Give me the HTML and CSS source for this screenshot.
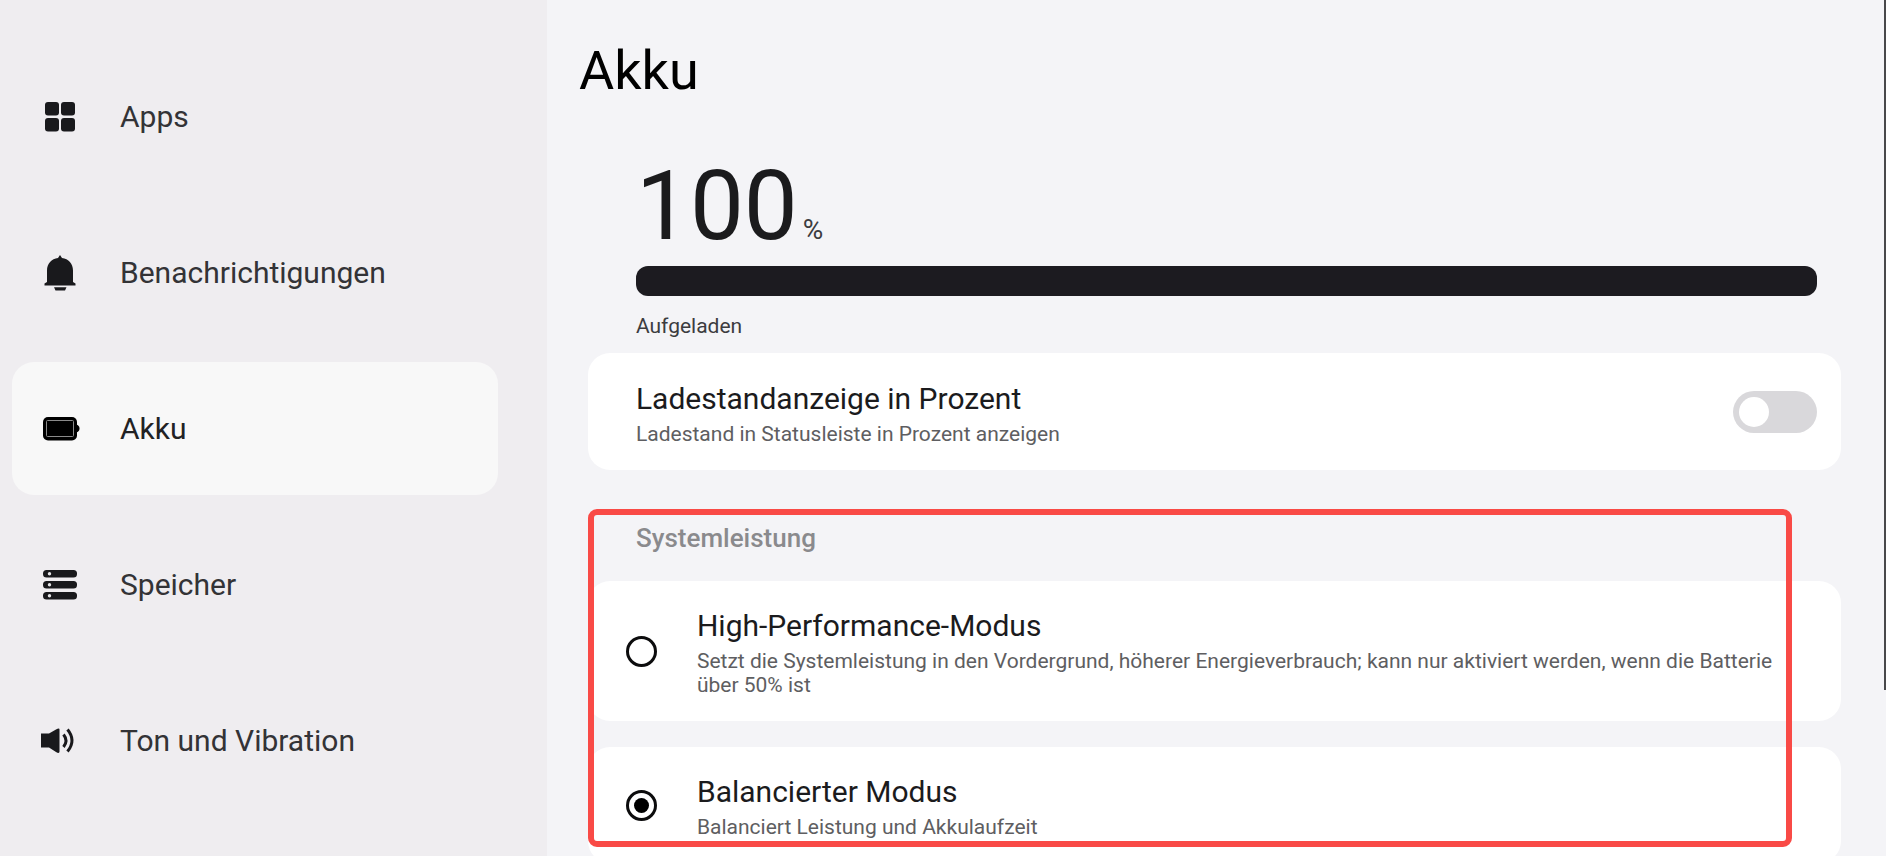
FILE: index.html
```html
<!DOCTYPE html>
<html lang="de">
<head>
<meta charset="utf-8">
<meta name="viewport" content="width=device-width, initial-scale=1">
<title>Akku</title>
<link rel="stylesheet" href="styles.css">
</head>
<body>
<div class="app">
  <nav class="sidebar" aria-label="Einstellungen">
    <a class="nav-item" href="#apps">
      <svg class="nav-icon" viewBox="0 0 36 36" aria-hidden="true">
        <rect x="3" y="3" width="14" height="13.5" rx="3"/>
        <rect x="19" y="3" width="14" height="13.5" rx="3"/>
        <rect x="3" y="19" width="14" height="13.5" rx="3"/>
        <rect x="19" y="19" width="14" height="13.5" rx="3"/>
      </svg>
      <span>Apps</span>
    </a>
    <a class="nav-item" href="#benachrichtigungen">
      <svg class="nav-icon" viewBox="0 0 36 36" aria-hidden="true">
        <path d="M18 0L16 2.900C9.500 3.800 5 8.500 5 15.500V27L2.500 28.500V30.500H33.500V28.500L31 27V15.500C31 8.500 26.500 3.800 20 2.900Z"/>
        <path d="M12 32.300H24.500L23 35.500H13.500Z"/>
      </svg>
      <span>Benachrichtigungen</span>
    </a>
    <a class="nav-item nav-item-active" href="#akku" aria-current="page">
      <svg class="nav-icon" viewBox="0 0 36 36" aria-hidden="true">
        <rect x="1" y="6" width="34" height="23.500" rx="5"/>
        <path d="M34 13.500c2.500.5 3.500 2 3.500 4s-1 3.500-3.500 4z"/>
        <rect class="icon-line" x="4.500" y="9.500" width="27" height="16" rx="1"/>
      </svg>
      <span>Akku</span>
    </a>
    <a class="nav-item" href="#speicher">
      <svg class="nav-icon" viewBox="0 0 36 36" aria-hidden="true">
        <rect x="1" y="3" width="34" height="7.500" rx="3.500"/>
        <rect x="1" y="14" width="34" height="7.500" rx="3.500"/>
        <rect x="1" y="25" width="34" height="7.500" rx="3.500"/>
        <g class="icon-dot"><circle cx="7.500" cy="6.700" r="1.700"/><circle cx="7.500" cy="17.700" r="1.700"/><circle cx="7.500" cy="28.700" r="1.700"/></g>
      </svg>
      <span>Speicher</span>
    </a>
    <a class="nav-item" href="#ton">
      <svg class="nav-icon" viewBox="0 0 36 36" aria-hidden="true">
        <path d="M-1 10.500H7L14 6.500Q17.500 4.500 17.500 6.500V28.500Q17.500 31 14 29L7 24.500H-1Z"/>
        <path class="icon-wave" d="M21.500 11.500Q26.500 17.700 21.500 24M25.500 6.500Q34.500 17.500 25.500 28.500"/>
      </svg>
      <span>Ton und Vibration</span>
    </a>
  </nav>

  <main class="content">
    <h1 class="page-title">Akku</h1>

    <section class="status" aria-label="Ladestand">
      <p class="level"><span class="level-value">100</span><span class="level-unit">%</span></p>
      <div class="bar" role="progressbar" aria-label="Ladestand" aria-valuenow="100" aria-valuemin="0" aria-valuemax="100"><div class="bar-fill" style="width: 100%"></div></div>
      <p class="status-text">Aufgeladen</p>
    </section>

    <label class="card card-setting">
      <span class="card-text">
        <span class="card-title">Ladestandanzeige in Prozent</span>
        <span class="card-note">Ladestand in Statusleiste in Prozent anzeigen</span>
      </span>
      <input class="switch" type="checkbox" role="switch">
    </label>

    <section class="modes" aria-labelledby="modes-title">
      <h2 class="modes-title" id="modes-title">Systemleistung</h2>
      <div class="mode-list">
        <label class="card card-mode">
          <input class="radio" type="radio" name="mode">
          <span class="card-text">
            <span class="card-title">High-Performance-Modus</span>
            <span class="card-note">Setzt die Systemleistung in den Vordergrund, höherer Energieverbrauch; kann nur aktiviert werden, wenn die Batterie über 50% ist</span>
          </span>
        </label>
        <label class="card card-mode">
          <input class="radio" type="radio" name="mode" checked>
          <span class="card-text">
            <span class="card-title">Balancierter Modus</span>
            <span class="card-note">Balanciert Leistung und Akkulaufzeit</span>
          </span>
        </label>
      </div>
      <div class="highlight"></div>
    </section>
  </main>
  <div class="edge"></div>
</div>
</body>
</html>
```

FILE: styles.css
```css
* {
  box-sizing: border-box;
}

body {
  margin: 0;
  font-family: Roboto, "Liberation Sans", sans-serif;
  color: #1b1b1d;
  background: #f4f4f7;
}

h1, h2, p {
  margin: 0;
}

.app {
  position: relative;
  display: flex;
  height: 100vh;
  overflow: hidden;
}

.sidebar {
  flex: none;
  display: flex;
  flex-direction: column;
  gap: 23px;
  width: 29%;
  padding: 50px 49px 0 12px;
  background: #efedf0;
}

.nav-item {
  flex: none;
  display: flex;
  align-items: center;
  gap: 42px;
  height: 133px;
  padding: 1px 30px 0;
  border-radius: 22px;
  font-size: 30px;
  line-height: 36px;
  color: #333336;
  text-decoration: none;
}

.nav-item-active {
  background: #f8f8f8;
  color: #222224;
}

.nav-icon {
  flex: none;
  width: 36px;
  height: 36px;
  overflow: visible;
  fill: #19191c;
}

.nav-item-active .nav-icon {
  fill: #000;
}

.icon-line {
  fill: none;
  stroke: #8a8a8a;
  stroke-width: 1;
}

.icon-dot {
  fill: #e6e6e8;
}

.icon-wave {
  fill: none;
  stroke: #19191c;
  stroke-width: 3;
}

.content {
  flex: 1;
  min-width: 0;
  padding: 39px 45px 0 41px;
}

.page-title {
  margin-left: -9px;
  font-size: 54px;
  line-height: 64px;
  font-weight: 400;
  color: #000;
}

.status {
  padding: 55px 24px 15px 48px;
}

.level {
  display: flex;
  align-items: baseline;
  gap: 5px;
}

.level-value {
  font-size: 96px;
  line-height: 96px;
}

.level-unit {
  font-size: 28px;
  line-height: 36px;
  color: #3c3c3f;
}

.bar {
  height: 30px;
  margin: 12px 0 18px;
  border-radius: 12px;
  overflow: hidden;
  background: #d9d8db;
}

.bar-fill {
  height: 100%;
  background: #1c1b20;
}

.status-text {
  font-size: 21px;
  line-height: 24px;
  color: #3c3c3f;
}

.card {
  display: flex;
  align-items: center;
  border-radius: 22px;
  background: #fff;
}

.card-setting {
  gap: 24px;
  padding: 28px 24px 24px 48px;
}

.card-mode {
  gap: 40px;
  padding: 27px 24px 24px 38px;
}

.card-text {
  flex: 1;
  display: flex;
  flex-direction: column;
  gap: 5px;
}

.card-title {
  font-size: 30px;
  line-height: 36px;
}

.card-note {
  font-size: 21px;
  line-height: 24px;
  color: #5e5e61;
}

.switch {
  appearance: none;
  flex: none;
  display: flex;
  align-items: center;
  width: 84px;
  height: 42px;
  margin: 0 0 4px;
  padding: 0 6px;
  border-radius: 21px;
  background: #d9d8db;
}

.switch::before {
  content: "";
  width: 30px;
  height: 30px;
  border-radius: 50%;
  background: #fff;
}

.switch:checked {
  justify-content: flex-end;
  background: #1c1b20;
}

.modes {
  position: relative;
  margin-top: 38px;
  padding-top: 14px;
}

.modes-title {
  margin: 0 48px 27px;
  font-size: 26px;
  line-height: 32px;
  font-weight: 500;
  color: #8a8a8d;
}

.mode-list {
  display: flex;
  flex-direction: column;
  gap: 26px;
}

.radio {
  appearance: none;
  flex: none;
  display: grid;
  place-items: center;
  width: 31px;
  height: 31px;
  margin: 0 0 3px;
  border: 3px solid #0c0c0d;
  border-radius: 50%;
}

.radio:checked::before {
  content: "";
  width: 15px;
  height: 15px;
  border-radius: 50%;
  background: #000;
}

.highlight {
  position: absolute;
  inset: 1px 49px 16px 0;
  border: 6px solid #f94a46;
  border-radius: 9px;
  pointer-events: none;
}

.edge {
  position: absolute;
  top: 0;
  right: 0;
  width: 2px;
  height: 690px;
  background: #48484b;
}
```
